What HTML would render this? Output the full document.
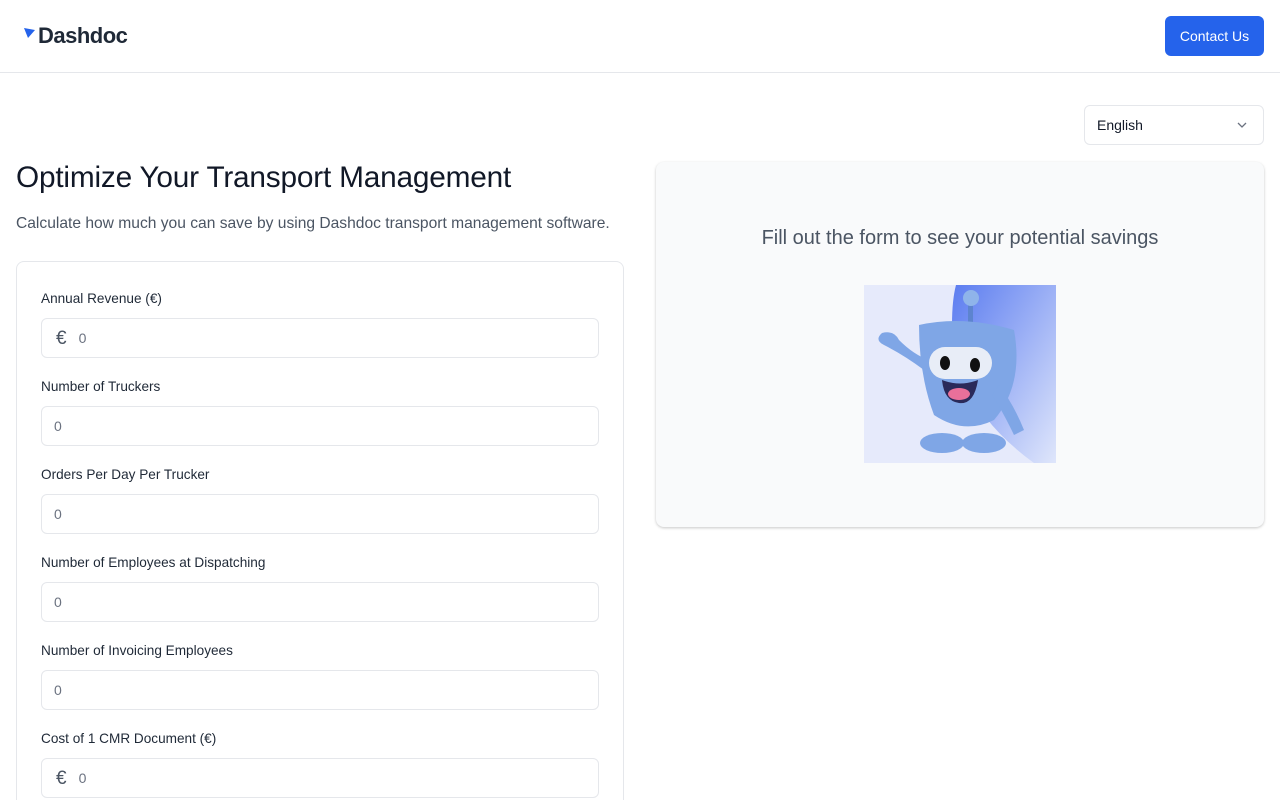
<!DOCTYPE html>
<html><head><meta charset="utf-8"><style>
*{box-sizing:border-box;margin:0;padding:0}
html,body{width:1280px;height:800px;overflow:hidden}
body{background:#fff;font-family:"Liberation Sans",sans-serif;color:#111827;position:relative}
.hdr{position:absolute;left:0;top:0;width:1280px;height:73px;border-bottom:1px solid #e5e7eb}
.logo{position:absolute;left:38px;top:23px;font-size:22px;font-weight:bold;color:#1f2937;letter-spacing:-0.5px}
.btn{position:absolute;left:1165px;top:16px;width:99px;height:40px;background:#2563eb;color:#fff;border-radius:6px;font-size:14px;text-align:center;line-height:40px}
.sel{position:absolute;left:1084px;top:105px;width:180px;height:40px;border:1px solid #e5e7eb;border-radius:6px;font-size:14px;line-height:38px;padding-left:12px}
h1{position:absolute;left:16px;top:161px;font-size:29.8px;font-weight:normal;color:#111827;letter-spacing:-0.2px}
.sub{position:absolute;left:16px;top:215px;font-size:15.6px;color:#4b5563}
.card{position:absolute;left:16px;top:261px;width:608px;height:539px;border:1px solid #e5e7eb;border-bottom:none;border-radius:8px 8px 0 0}
.lab{position:absolute;left:41px;font-size:13.6px;color:#1f2937}
.inp{position:absolute;left:41px;width:558px;height:40px;border:1px solid #e5e7eb;border-radius:6px;font-size:14px;color:#6b7280;line-height:38px;padding-left:12px}
.inp .e{font-size:19px;color:#4b5563;margin-right:12px;margin-left:2px;position:relative;top:1px}
.panel{position:absolute;left:656px;top:162px;width:608px;height:365px;background:#f9fafb;border-radius:8px;box-shadow:0 1px 3px rgba(0,0,0,.15),0 1px 2px rgba(0,0,0,.08)}
.pt{position:absolute;left:0;width:608px;top:65px;text-align:center;font-size:20px;color:#4b5563}
</style></head><body>
<div class="hdr">
<svg style="position:absolute;left:23px;top:27px" width="14" height="12" viewBox="0 0 14 12"><path d="M1 1 L12 3 L5 11 Z" fill="#2563eb"/></svg>
<div class="logo">Dashdoc</div>
<div class="btn">Contact Us</div>
</div>
<div class="sel">English<svg style="position:absolute;right:16px;top:15px" width="10" height="8" viewBox="0 0 10 8"><path d="M1 2 L5 6 L9 2" stroke="#6b7280" stroke-width="1.3" fill="none"/></svg></div>
<h1>Optimize Your Transport Management</h1>
<div class="sub">Calculate how much you can save by using Dashdoc transport management software.</div>
<div class="card"></div>
<div class="lab" style="top:291px">Annual Revenue (€)</div>
<div class="inp" style="top:318px"><span class="e">€</span>0</div>
<div class="lab" style="top:379px">Number of Truckers</div>
<div class="inp" style="top:406px">0</div>
<div class="lab" style="top:467px">Orders Per Day Per Trucker</div>
<div class="inp" style="top:494px">0</div>
<div class="lab" style="top:555px">Number of Employees at Dispatching</div>
<div class="inp" style="top:582px">0</div>
<div class="lab" style="top:643px">Number of Invoicing Employees</div>
<div class="inp" style="top:670px">0</div>
<div class="lab" style="top:731px">Cost of 1 CMR Document (€)</div>
<div class="inp" style="top:758px"><span class="e">€</span>0</div>
<div class="panel"><div class="pt">Fill out the form to see your potential savings</div></div>
<svg style="position:absolute;left:864px;top:285px" width="192" height="178" viewBox="0 0 192 178">
<defs><linearGradient id="g" x1="0" y1="0" x2="1" y2="1"><stop offset="0" stop-color="#5b7cf0"/><stop offset="1" stop-color="#dfe6fb"/></linearGradient></defs>
<rect width="192" height="178" fill="#e6eafb"/>
<path d="M92 0 H192 V178 H170 Q90 120 88 40 Q88 15 92 0Z" fill="url(#g)"/>
<rect x="104" y="12" width="5" height="40" fill="#5d84cf"/>
<circle cx="107" cy="13" r="8" fill="#8fb4ea"/>
<path d="M55 40 Q100 30 150 45 Q160 100 130 135 Q100 150 70 130 Q55 90 55 40Z" fill="#7fa6e6"/>
<path d="M60 85 Q40 70 20 60 Q10 55 18 48 Q30 45 35 55 Q50 70 65 75Z" fill="#7fa6e6"/>
<path d="M135 100 Q150 120 160 145 L150 150 Q138 125 128 110Z" fill="#7fa6e6"/>
<ellipse cx="78" cy="158" rx="22" ry="10" fill="#7fa6e6"/>
<ellipse cx="120" cy="158" rx="22" ry="10" fill="#7fa6e6"/>
<rect x="65" y="62" width="63" height="32" rx="16" fill="#e8edf7"/>
<ellipse cx="81" cy="78" rx="5" ry="7" fill="#111"/><ellipse cx="111" cy="80" rx="5" ry="7" fill="#111"/>
<path d="M78 95 Q96 102 114 95 Q110 120 95 118 Q80 116 78 95Z" fill="#2a2a5a"/>
<ellipse cx="95" cy="109" rx="11" ry="6" fill="#e9709a"/>
</svg>
</body></html>
